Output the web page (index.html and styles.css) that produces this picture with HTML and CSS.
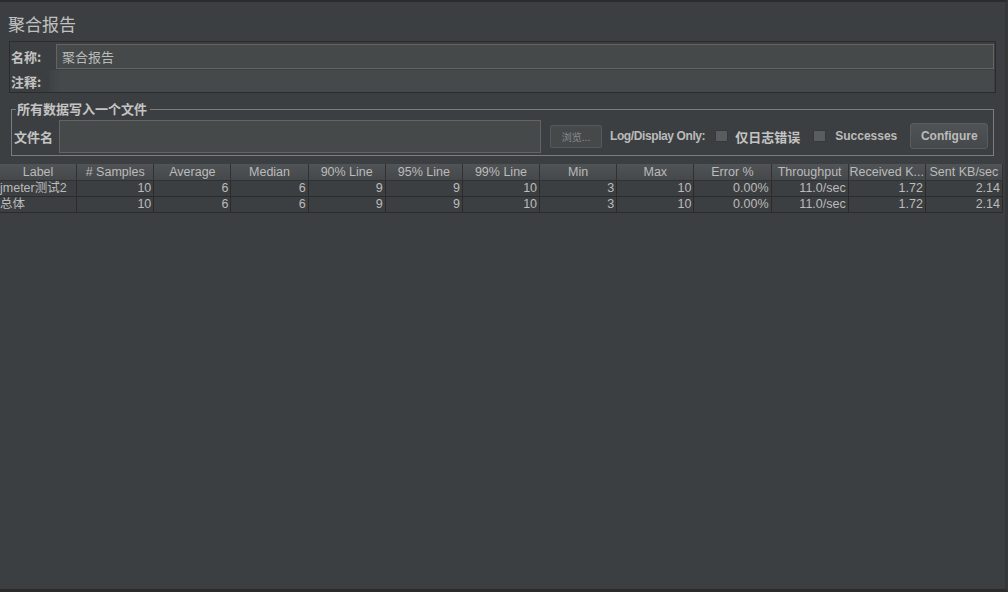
FILE: index.html
```html
<!DOCTYPE html>
<html lang="zh">
<head>
<meta charset="utf-8">
<title>聚合报告</title>
<link rel="stylesheet" href="styles.css">
</head>
<body>
<div class="app">
  <div class="title">聚合报告</div>

  <div class="name-panel">
    <div class="nrow">
      <span class="nlabel">名称:</span>
      <div class="field name-field">聚合报告</div>
    </div>
    <div class="nrow">
      <span class="nlabel short">注释:</span>
      <div class="field comment-field"></div>
    </div>
  </div>

  <fieldset class="file-panel">
    <legend>所有数据写入一个文件</legend>
    <div class="frow">
      <span class="flabel">文件名</span>
      <div class="field file-field"></div>
      <button class="browse">浏览...</button>
      <span class="opt-label log">Log/Display Only:</span>
      <span class="check c1"></span>
      <span class="cjk-bold">仅日志错误</span>
      <span class="check c2"></span>
      <span class="opt-label succ">Successes</span>
      <button class="configure">Configure</button>
    </div>
  </fieldset>

  <div class="table">
    <div class="th">Label</div>
    <div class="th"># Samples</div>
    <div class="th">Average</div>
    <div class="th">Median</div>
    <div class="th">90% Line</div>
    <div class="th">95% Line</div>
    <div class="th">99% Line</div>
    <div class="th">Min</div>
    <div class="th">Max</div>
    <div class="th">Error %</div>
    <div class="th">Throughput</div>
    <div class="th">Received K...</div>
    <div class="th">Sent KB/sec</div>

    <div class="td left">jmeter测试2</div>
    <div class="td">10</div>
    <div class="td">6</div>
    <div class="td">6</div>
    <div class="td">9</div>
    <div class="td">9</div>
    <div class="td">10</div>
    <div class="td">3</div>
    <div class="td">10</div>
    <div class="td">0.00%</div>
    <div class="td">11.0/sec</div>
    <div class="td">1.72</div>
    <div class="td">2.14</div>

    <div class="td left">总体</div>
    <div class="td">10</div>
    <div class="td">6</div>
    <div class="td">6</div>
    <div class="td">9</div>
    <div class="td">9</div>
    <div class="td">10</div>
    <div class="td">3</div>
    <div class="td">10</div>
    <div class="td">0.00%</div>
    <div class="td">11.0/sec</div>
    <div class="td">1.72</div>
    <div class="td">2.14</div>
  </div>
</div>
</body>
</html>
```

FILE: styles.css
```css
html, body {
  margin: 0;
  padding: 0;
  background: #3c3f41;
}

body {
  font-family: "Liberation Sans", Arial, "Noto Sans CJK SC", sans-serif;
  color: #bbbbbb;
}

.app {
  box-sizing: border-box;
  width: 1008px;
  height: 592px;
  border-top: 2px solid #2b2b2b;
  border-bottom: 3px solid #2b2b2b;
  border-right: 3px solid #353739;
  overflow: hidden;
}

.title {
  padding: 10px 0 0 8px;
  height: 29px;
  font-family: "Noto Sans CJK SC", sans-serif;
  font-size: 17px;
  line-height: 23px;
  color: #c0c0c0;
}

/* name / comment panel */
.name-panel {
  box-sizing: border-box;
  margin-left: 9px;
  width: 987px;
  height: 52px;
  border: 1px solid #2b2b2b;
  padding-top: 2px;
  display: flex;
  flex-direction: column;
  gap: 1px;
}

.nrow {
  display: flex;
  align-items: stretch;
}

.nrow:first-child { height: 25px; }
.nrow:last-child { height: 22px; }

.nlabel {
  flex: none;
  width: 45px;
  padding-left: 1px;
  font-family: "Noto Sans CJK SC", sans-serif;
  font-weight: 700;
  font-size: 13px;
  display: flex;
  align-items: center;
  color: #c4c4c4;
  white-space: nowrap;
}

.nlabel.short { width: 38px; }

.field {
  box-sizing: border-box;
  background: #45494a;
  border: 1px solid #646464;
  flex: 1;
}

.name-field {
  font-family: "Noto Sans CJK SC", sans-serif;
  font-size: 13px;
  line-height: 23px;
  padding-left: 5px;
  color: #bbbbbb;
  margin-right: 1px;
}

.comment-field {
  border: none;
  background: linear-gradient(to right, #3f4243 0, #45494a 12px);
  margin-right: 1px;
}

/* file panel */
.file-panel {
  box-sizing: border-box;
  margin: 8px 0 0 11px;
  width: 983px;
  border: 1px solid #7d7d7d;
  padding: 0 2px 2px 2px;
  min-width: 0;
}

.file-panel legend {
  padding: 0 3px 0 1px;
  margin-left: 2px;
  font-family: "Noto Sans CJK SC", sans-serif;
  font-weight: 700;
  font-size: 13px;
  line-height: 16px;
  color: #c4c4c4;
}

.frow {
  display: flex;
  align-items: center;
  height: 34px;
  padding-top: 2px;
  white-space: nowrap;
}

.frow > * {
  flex: none;
}

.flabel {
  width: 45px;
  font-family: "Noto Sans CJK SC", sans-serif;
  font-weight: 700;
  font-size: 13px;
  color: #c4c4c4;
}

.file-field {
  width: 482px;
  height: 33px;
}

.browse {
  box-sizing: border-box;
  margin-left: 9px;
  width: 52px;
  height: 23px;
  padding: 0;
  background: #45494a;
  border: 1px solid #56595b;
  border-radius: 2px;
  color: #8a8a8a;
  font-family: "Noto Sans CJK SC", sans-serif;
  font-size: 10px;
}

.opt-label {
  margin-left: 8px;
  font-weight: 700;
  font-size: 12px;
  color: #bbbbbb;
}

.opt-label.log {
  letter-spacing: -0.4px;
}

.check {
  box-sizing: border-box;
  width: 13px;
  height: 12px;
  margin-left: 10px;
  background: #5a5d5f;
  border: 1px solid #36383a;
  border-radius: 1px;
}

.check.c2 { margin-left: 13px; }

.cjk-bold {
  margin-left: 7px;
  font-family: "Noto Sans CJK SC", sans-serif;
  font-weight: 700;
  font-size: 13px;
  color: #c4c4c4;
}

.opt-label.succ { margin-left: 9px; }

.configure {
  box-sizing: border-box;
  margin-left: 13px;
  width: 78px;
  height: 26px;
  padding: 0;
  background: linear-gradient(#4f5355, #46494b);
  border: 1px solid #5a5d5f;
  border-radius: 3px;
  color: #bbbbbb;
  font-family: "Liberation Sans", Arial, sans-serif;
  font-weight: 700;
  font-size: 12px;
}

/* table */
.table {
  margin-top: 8px;
  width: 1003px;
  display: grid;
  grid-template-columns: repeat(13, 1fr);
  grid-auto-rows: 16px;
  grid-template-rows: 17px;
}

.th {
  box-sizing: border-box;
  background: linear-gradient(#505456, #45484a);
  border-right: 1px solid #2f3133;
  border-bottom: 1px solid #2f3133;
  text-align: center;
  font-size: 12.5px;
  line-height: 16px;
  color: #bbbbbb;
  white-space: nowrap;
  overflow: hidden;
}

.td {
  box-sizing: border-box;
  border-right: 1px solid #2b2b2b;
  border-bottom: 1px solid #2b2b2b;
  text-align: right;
  padding-right: 2px;
  font-family: "Liberation Sans", Arial, "Noto Sans CJK SC", sans-serif;
  font-size: 12.5px;
  line-height: 15px;
  color: #bbbbbb;
  white-space: nowrap;
  overflow: hidden;
}

.td.left {
  text-align: left;
  padding-left: 0;
}
```
